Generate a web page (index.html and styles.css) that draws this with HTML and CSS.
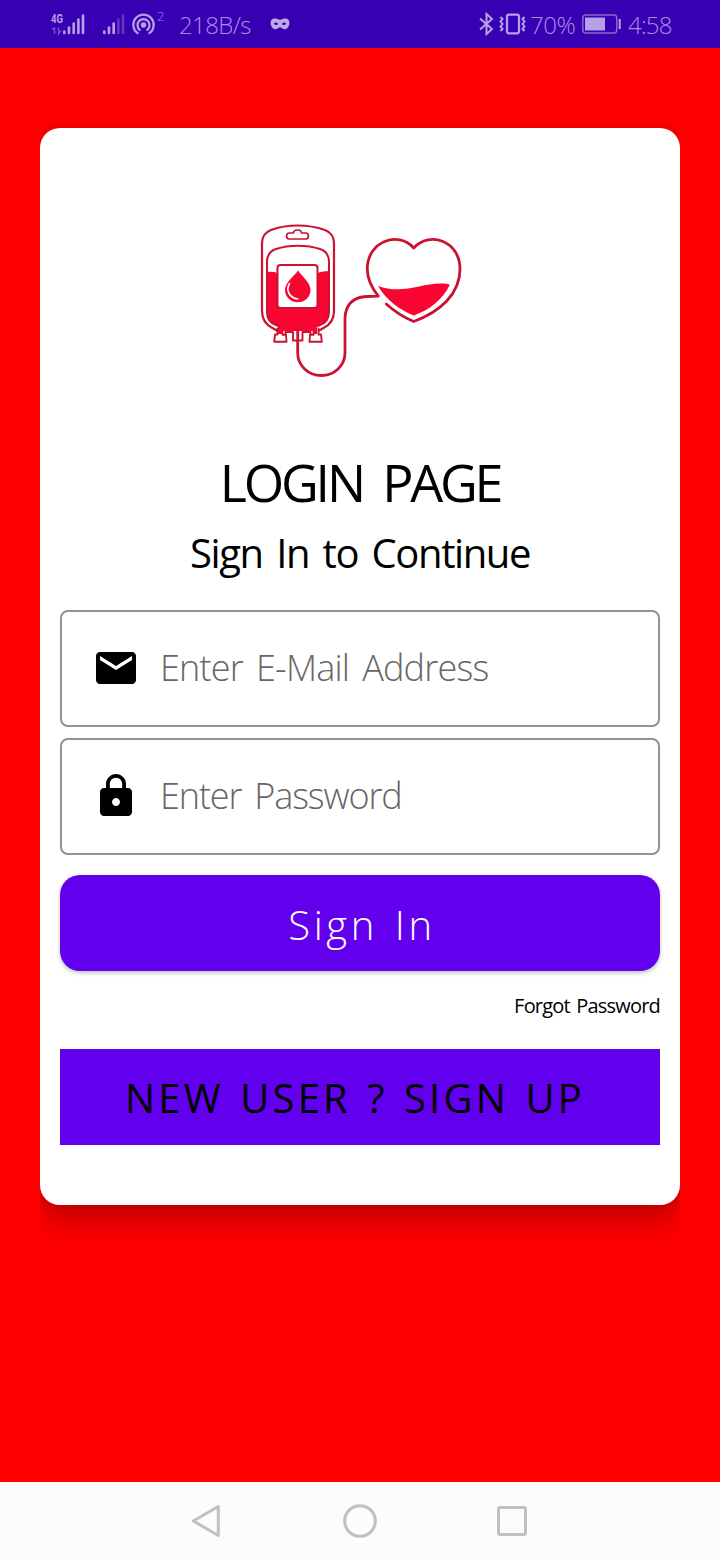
FILE: index.html
```html
<!DOCTYPE html>
<html lang="en">
<head>
<meta charset="utf-8">
<title>Login</title>
<link rel="stylesheet" href="styles.css">
</head>
<body>
<div class="screen">
  <header class="status">
    <svg class="status-signal" width="116" height="48" viewBox="50 0 116 48" fill="none" stroke="#b7a0e6">
      <text class="net" x="51" y="23" fill="#b7a0e6" stroke="none" textLength="12" lengthAdjust="spacingAndGlyphs">4G</text>
      <g stroke="#7650cb" stroke-width="1.500"><path d="M54.500 27.500V34M52 29.500l2.500-2M58.500 27.500V34l2.500-3.500"/></g>
      <path stroke-width="2.600" stroke-linecap="round" d="M64.300 31.500v1.500M69 27.500v5.500M73.700 23.500v9.500M78.400 19.500v13.500M83 15.500v17.500M104.300 31.500v1.500M109 27.500v5.500M113.700 23.500v9.500"/>
      <path stroke="#6137c4" stroke-width="2.600" stroke-linecap="round" d="M118.400 19.500v13.500M123 15.500v17.500"/>
      <circle cx="143.500" cy="25" r="2.700" fill="#b7a0e6" stroke="none"/>
      <path stroke-width="2.200" stroke-linecap="round" d="M139.800 29.800a6 6 0 1 1 7.400 0M137.700 33.200a10.200 10.200 0 1 1 11.600 0"/>
      <text class="sup" x="157" y="21" fill="#a48be0" stroke="none">2</text>
    </svg>
    <span class="speed">218B/s</span>
    <svg class="mask" width="20" height="14" viewBox="0 0 20 14"><path fill="#c0a9e8" fill-rule="evenodd" d="M1 3.500C2.500.5 7 1 10 3c3-2 7.500-2.500 9 .5 1 3 0 6-2 8-2.500 1.800-5 0-7-1.500-2 1.500-4.500 3.300-7 1.500-2-2-3-5-2-8ZM3.800 6.800c1 1.600 3 1.600 4.500.2C6.800 5.200 5 5.200 3.800 6.800Zm12.400 0c-1.200-1.600-3-1.600-4.500.2 1.500 1.400 3.500 1.400 4.500-.2Z"/></svg>
    <svg class="status-mode" width="50" height="48" viewBox="478 0 50 48" fill="none" stroke="#b7a0e6" stroke-width="2">
      <path d="M480 18.500l12 10.500-5.500 5V14l5.500 5-12 10.500"/>
      <rect x="507" y="14.700" width="12" height="18.600" rx="2" stroke-width="2.200"/>
      <path d="M500.500 17l2 2-2 2.500 2 2.500-2 2.500 2 2.500-2 2M524.500 17l-2 2 2 2.500-2 2.500 2 2.500-2 2.500 2 2"/>
    </svg>
    <span class="percent">70%</span>
    <svg class="battery" width="39" height="20" viewBox="0 0 39 20"><rect x=".8" y="1" width="34" height="18" rx="3" fill="none" stroke="#8967d4" stroke-width="1.500"/><path fill="#b7a0e6" d="M3 3.500h20v13H3zM36.700 5h2v10h-2z"/></svg>
    <span class="clock">4:58</span>
  </header>

  <main class="main">
    <section class="card">
      <svg class="logo" width="220" height="170" viewBox="250 215 220 170" fill="none" stroke="#cb1230" stroke-width="2.800" stroke-linejoin="round" stroke-linecap="round">
        <path fill="#fa0532" stroke="none" d="M267 272q5-1 11 1h39q6-2 12-2v41q0 10-9 13l-3 1.500V334h-4v-3H282.500v3H278v-7.500l-2-1.500q-9-3-9-13Z"/>
        <path stroke-width="2.200" d="M277 330.500l-5-2.800Q262 322.500 262 311V243c0-7 4-11 9-13 16-6 37-6 54 0 5 2 9 6 9 13v68q0 11.500-10 16.700L319 330.500"/>
        <path stroke-width="2" d="M278.500 326l-2.500-1q-9-3-9-13V262c0-7 3-11 9-13 13-4.500 31-4.500 44 0 6 2 9 6 9 13v50q0 10-9 13l-2.500 1"/>
        <path stroke-width="1.900" d="M277.500 328.500v6h-2.500l-.8 7.200H286.500l-.5-7h-3.500v-3M318.500 328.500v6h2.500l.8 7.200H309.500l.5-7h3.500v-3"/>
        <path stroke-width="1.900" d="M285.500 334.500v-2.500h7.500v8.500h4.700M310.500 334.500v-2.500h-8v8.500h-4.800"/>
        <path stroke-width="1.700" d="M293.500 233c0-4 8-4 8 0h4.300c3.500 0 3.500 6 0 6h-16.600c-3.500 0-3.500-6 0-6Z"/>
        <rect x="277.500" y="265" width="40" height="43" rx="3" fill="#fff" stroke-width="2"/>
        <path fill="#fa0532" stroke="none" d="M298 270.500c4 6 12.500 12 12.500 19.500a12.500 12 0 0 1-25.500 0c0-7.500 9-13.500 13-19.500Z"/>
        <path stroke="#fff" stroke-width="1.600" d="M289.500 283.500c-4 7 0 14.500 8.500 15.500"/>
        <path d="M297.700 330V353a23.650 22.500 0 0 0 47.300 0V318q1-20.500 22-21.500l11.300-.4C371 287 367.300 279 367.300 269c0-28 31-38.500 46.400-21C430 230.500 460 241 460 269c0 25-20 43-46.300 52.500Q399 315.500 386.300 304"/>
        <path fill="#fa0532" stroke="none" d="M378 286c24 9 44-3 63-2.500 6 0 9 .5 8.500 2-7 14.500-21 25-35.800 30C400 310 386 300 378 286Z"/>
      </svg>
      <h1 class="title">LOGIN PAGE</h1>
      <p class="subtitle">Sign In to Continue</p>
      <div class="field">
        <svg width="48" height="48" viewBox="0 0 24 24"><path d="M20 4H4c-1.100 0-1.990.9-1.990 2L2 18c0 1.100.9 2 2 2h16c1.100 0 2-.9 2-2V6c0-1.100-.9-2-2-2zm0 4l-8 5-8-5V6l8 5 8-5v2z"/></svg>
        <span class="hint hint-mail">Enter E-Mail Address</span>
      </div>
      <div class="field">
        <svg width="48" height="48" viewBox="0 0 24 24"><path d="M18 8h-1V6c0-2.760-2.240-5-5-5S7 3.240 7 6v2H6c-1.100 0-2 .9-2 2v10c0 1.100.9 2 2 2h12c1.100 0 2-.9 2-2V10c0-1.100-.9-2-2-2zm-6 9c-1.100 0-2-.9-2-2s.9-2 2-2 2 .9 2 2-.9 2-2 2zm3.100-9H8.900V6c0-1.710 1.390-3.100 3.100-3.100 1.710 0 3.100 1.390 3.100 3.100v2z"/></svg>
        <span class="hint hint-pass">Enter Password</span>
      </div>
      <button class="btn signin"><span>Sign In</span></button>
      <a class="forgot">Forgot Password</a>
      <button class="btn signup"><span>NEW USER ? SIGN UP</span></button>
    </section>
  </main>

  <nav class="nav">
    <svg width="32" height="36" viewBox="2 0 32 36"><path d="M28.300 3.500v29L3.300 18Z"/></svg>
    <svg width="36" height="36" viewBox="0 0 36 36"><circle cx="18" cy="18" r="15.300"/></svg>
    <svg width="32" height="36" viewBox="0 0 32 36"><rect x="2.500" y="4.500" width="27" height="27" rx="1.500"/></svg>
  </nav>
</div>
</body>
</html>
```
FILE: styles.css
```css
* { box-sizing: border-box; }
body { margin: 0; font-family: "Open Sans", "Noto Sans", sans-serif; }
.screen { width: 720px; height: 1560px; display: flex; flex-direction: column; background: #f00; }

.status { height: 48px; display: flex; align-items: center; padding-left: 50px; background: #3800b3; color: #a78de2; font-size: 24px; font-weight: 300; line-height: 48px; white-space: nowrap; }
.status svg { flex: none; overflow: visible; }
.net { font: 700 12.500px Roboto, sans-serif; }
.sup { font: 300 13px "Open Sans", sans-serif; }
.speed { width: 91px; padding: 1px 0 0 13px; letter-spacing: -.6px; }
.mask { margin-left: 13px; }
.status-mode { margin-left: 188px; }
.percent { width: 54px; padding: 1px 0 0 2px; letter-spacing: -.5px; }
.clock { padding: 1px 0 0 7px; letter-spacing: -.8px; }

.main { flex: 1; padding: 80px 40px 0; }
.card { height: 1077px; display: flex; flex-direction: column; padding: 87px 20px 0; border-radius: 20px; background: #fff; box-shadow: 0 14px 30px rgba(0, 0, 0, .27), 0 0 8px rgba(0, 0, 0, .08); clip-path: inset(-20px 0 -60px 0); }
.logo { align-self: center; }
.title { margin: 62px 0 0; height: 70px; line-height: 70px; text-align: center; font-size: 52px; font-weight: 400; letter-spacing: -3.200px; word-spacing: 9px; white-space: nowrap; }
.subtitle { margin: 8px 0 0; height: 56px; line-height: 56px; text-align: center; font-size: 40px; letter-spacing: -1.400px; word-spacing: 4.500px; white-space: nowrap; }
.field { height: 117px; margin-top: 11px; display: flex; align-items: center; padding: 0 0 2px 30px; border: 2px solid #929292; border-radius: 8px; }
.subtitle + .field { margin-top: 29px; }
.hint { margin-left: 20px; font-size: 36px; font-weight: 300; color: #666; white-space: nowrap; }
.hint-mail { letter-spacing: -.8px; word-spacing: 4.500px; }
.hint-pass { letter-spacing: -1.100px; word-spacing: 4.500px; }
.btn { height: 96px; flex: none; border: 0; padding: 0; font: 300 40px "Open Sans", sans-serif; background: #6200ee; white-space: nowrap; }
.signin { margin-top: 20px; padding: 2px 0 0 4px; border-radius: 20px; color: #fff; letter-spacing: 3.600px; word-spacing: 3px; box-shadow: 0 2px 4px rgba(0, 0, 0, .25); }
.forgot { height: 30px; margin-top: 20px; line-height: 30px; text-align: right; font-size: 20px; letter-spacing: -.8px; word-spacing: 2px; white-space: nowrap; }
.signup { margin-top: 28px; padding-right: 10px; color: #000; font-weight: 400; letter-spacing: 3.200px; word-spacing: 2.700px; }

.nav { height: 78px; display: flex; align-items: center; justify-content: center; gap: 118px; background: #fcfcfc; }
.nav svg { fill: none; stroke: #c0c0c0; stroke-width: 3; stroke-linejoin: round; }
```
